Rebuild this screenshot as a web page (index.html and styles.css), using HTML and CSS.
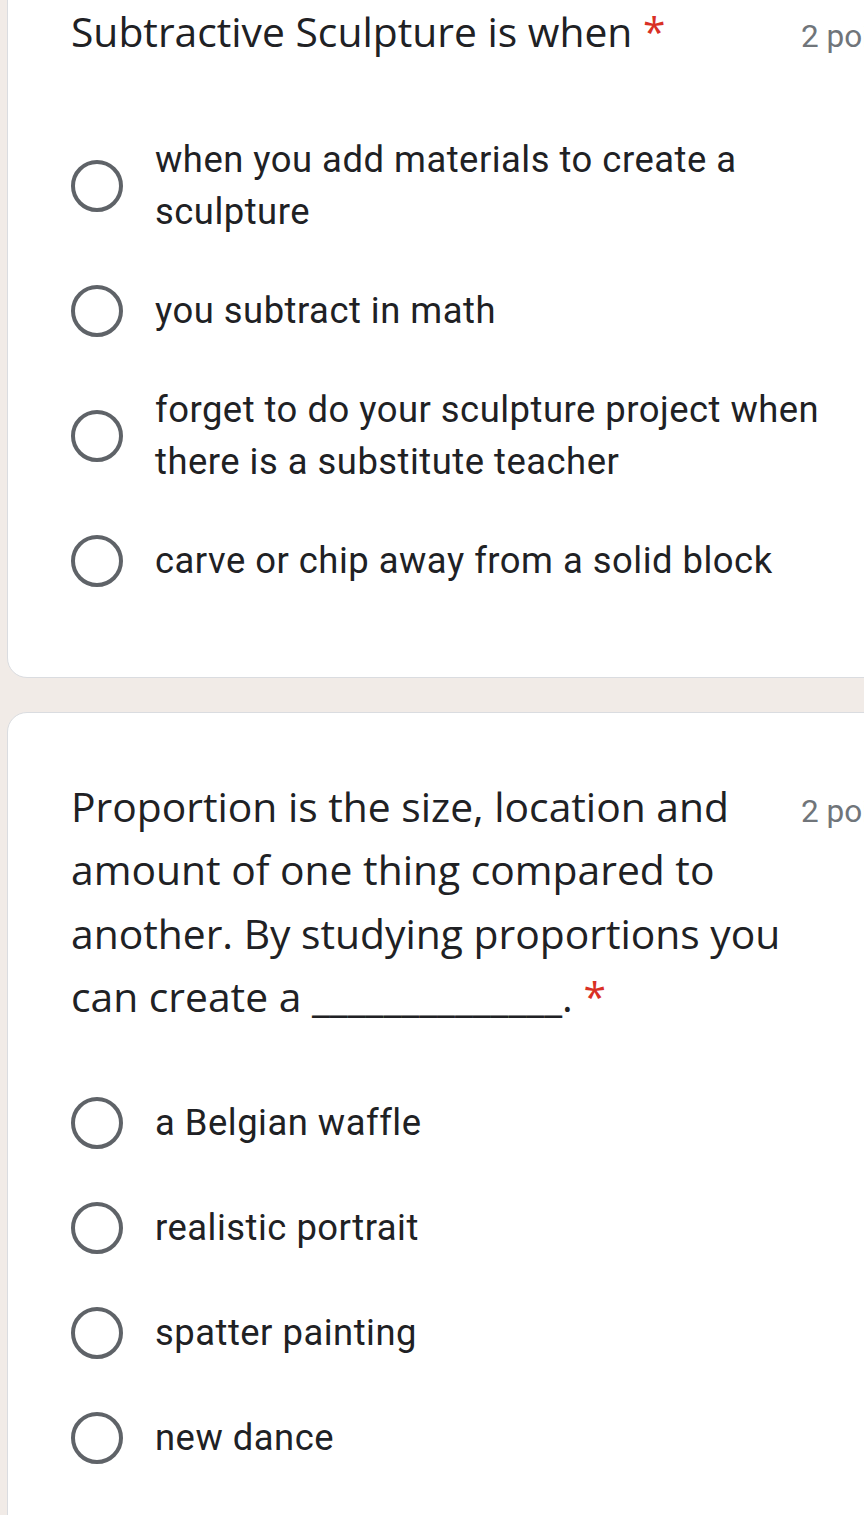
FILE: index.html
```html
<!DOCTYPE html>
<html lang="en">
<head>
<meta charset="utf-8">
<title>Form</title>
<link rel="stylesheet" href="styles.css">
</head>
<body>
<main class="form">
  <section class="card card-first">
    <div class="q-head">
      <div class="q-title">Subtractive Sculpture is when <span class="req">*</span></div>
      <div class="q-points">2 points</div>
    </div>
    <div class="options">
      <label class="opt"><span class="radio"></span><span class="opt-text">when you add materials to create a sculpture</span></label>
      <label class="opt"><span class="radio"></span><span class="opt-text">you subtract in math</span></label>
      <label class="opt"><span class="radio"></span><span class="opt-text">forget to do your sculpture project when there is a substitute teacher</span></label>
      <label class="opt"><span class="radio"></span><span class="opt-text">carve or chip away from a solid block</span></label>
    </div>
  </section>
  <section class="card card-second">
    <div class="q-head">
      <div class="q-title">Proportion is the size, location and amount of one thing compared to another. By studying proportions you can create a ______________. <span class="req">*</span></div>
      <div class="q-points">2 points</div>
    </div>
    <div class="options">
      <label class="opt"><span class="radio"></span><span class="opt-text">a Belgian waffle</span></label>
      <label class="opt"><span class="radio"></span><span class="opt-text">realistic portrait</span></label>
      <label class="opt"><span class="radio"></span><span class="opt-text">spatter painting</span></label>
      <label class="opt"><span class="radio"></span><span class="opt-text">new dance</span></label>
    </div>
  </section>
</main>
</body>
</html>
```

FILE: styles.css
```css
html, body {
  margin: 0;
  padding: 0;
}
body {
  background: #f1ebe7;
  width: 864px;
  height: 1515px;
  overflow: hidden;
}
.form {
  display: flex;
  flex-direction: column;
  gap: 34px;
  padding-left: 7px;
  margin-top: -40px;
}
.card {
  background: #fff;
  border: 1px solid #dadce0;
  border-radius: 20px;
  width: 960px;
  box-sizing: border-box;
  padding-left: 63px;
}
.card-first {
  padding-top: 39px;
  padding-bottom: 84px;
}
.card-second {
  padding-top: 62px;
  padding-bottom: 120px;
}
.q-head {
  display: flex;
  align-items: baseline;
  width: 830px;
}
.q-title {
  font-family: "Open Sans", sans-serif;
  font-size: 40.8px;
  line-height: 63.5px;
  color: #202124;
  width: 715px;
  flex: none;
}
.req {
  color: #d93025;
}
.q-points {
  font-family: Roboto, sans-serif;
  font-size: 31.5px;
  color: #70757a;
  margin-left: 15px;
  white-space: nowrap;
}
.card-first .options {
  margin-top: 70px;
}
.card-second .options {
  margin-top: 62px;
}
.options {
  display: flex;
  flex-direction: column;
  gap: 41px;
}
.opt {
  display: flex;
  align-items: center;
  min-height: 64px;
}
.radio {
  flex: none;
  width: 52px;
  height: 52px;
  border: 4px solid #5f6368;
  border-radius: 50%;
  box-sizing: border-box;
}
.opt-text {
  margin-left: 32px;
  font-family: Roboto, sans-serif;
  font-size: 36.4px;
  letter-spacing: 0.5px;
  line-height: 52px;
  color: #202124;
  max-width: 700px;
}
```
